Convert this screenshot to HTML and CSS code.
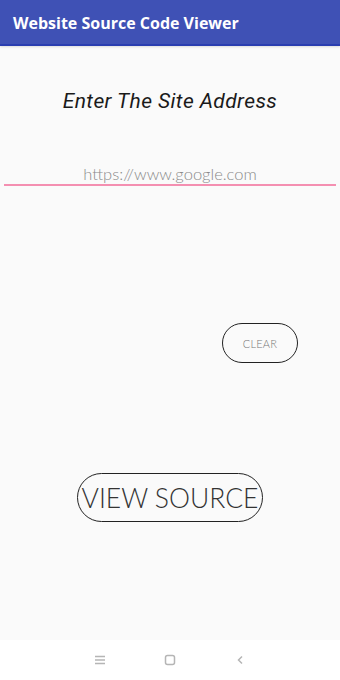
FILE: index.html
```html
<!DOCTYPE html>
<html>
<head>
<meta charset="utf-8">
<link rel="stylesheet" href="styles.css">
</head>
<body>
<div class="app">
  <header class="appbar">
    <span class="title">Website Source Code Viewer</span>
  </header>
  <main class="content">
    <h1 class="prompt">Enter The Site Address</h1>
    <div class="field">
      <span class="hint">https://www.google.com</span>
    </div>
    <div class="clear-row">
      <button class="btn btn-clear">CLEAR</button>
    </div>
    <div class="view-row">
      <button class="btn btn-view">VIEW SOURCE</button>
    </div>
  </main>
  <nav class="navbar">
    <svg class="nav-icon" width="12" height="12" viewBox="0 0 12 12"><path d="M1 2.5h10M1 6h10M1 9.5h10" stroke="#b5b5b5" stroke-width="1.4" fill="none"/></svg>
    <svg class="nav-icon" width="12" height="12" viewBox="0 0 12 12"><rect x="1.5" y="1.5" width="9" height="9" rx="2" stroke="#b5b5b5" stroke-width="1.5" fill="none"/></svg>
    <svg class="nav-icon" width="12" height="12" viewBox="0 0 12 12"><path d="M8 2.5L4.5 6L8 9.5" stroke="#b5b5b5" stroke-width="1.5" fill="none"/></svg>
  </nav>
</div>
</body>
</html>
```
FILE: styles.css
```css
* { box-sizing: border-box; }
html, body { margin: 0; padding: 0; }
body {
  width: 340px;
  height: 680px;
  background: #fafafa;
  font-family: Roboto, "Noto Sans", sans-serif;
  overflow: hidden;
}
.app {
  display: flex;
  flex-direction: column;
  height: 680px;
}
.appbar {
  height: 46px;
  flex: none;
  background: #3f51b5;
  border-bottom: 2px solid #2a3eb0;
  display: flex;
  align-items: center;
  padding: 2px 0 0 13px;
  box-shadow: 0 1px 2px rgba(0,0,0,0.12);
}
.title {
  color: #fff;
  font-weight: 700;
  font-size: 16px;
  font-family: "Open Sans", Roboto, sans-serif;
}
.content {
  flex: 1;
  display: flex;
  flex-direction: column;
}
.prompt {
  margin: 42px 0 0;
  text-align: center;
  font-style: italic;
  font-weight: 400;
  font-size: 21px;
  letter-spacing: 0.4px;
  color: #1a1a1a;
  line-height: 26px;
}
.field {
  margin: 46px 4px 0;
  border-bottom: 2px solid #f48fb1;
  text-align: center;
  height: 26px;
  padding-top: 4px;
  line-height: 20px;
}
.hint {
  color: #8a8a8a;
  font-size: 16.5px;
  font-weight: 300;
  font-family: Lato, Roboto, sans-serif;
}
.clear-row {
  display: flex;
  justify-content: flex-end;
  padding-right: 42px;
  margin-top: 137px;
}
.btn {
  background: transparent;
  border: 1.6px solid #222;
  font-family: Lato, Roboto, sans-serif;
  font-weight: 300;
  color: #666;
  padding: 0;
}
.btn-clear {
  width: 76px;
  height: 40px;
  border-radius: 20px;
  font-size: 11px;
  letter-spacing: 0.2px;
  color: #777;
}
.view-row {
  display: flex;
  justify-content: center;
  margin-top: 110px;
}
.btn-view {
  width: 186px;
  height: 49px;
  border-radius: 25px;
  font-size: 26.5px;
  color: #333;
}
.navbar {
  flex: none;
  height: 40px;
  background: #fff;
  display: flex;
  justify-content: center;
  align-items: center;
  gap: 58px;
}
```
